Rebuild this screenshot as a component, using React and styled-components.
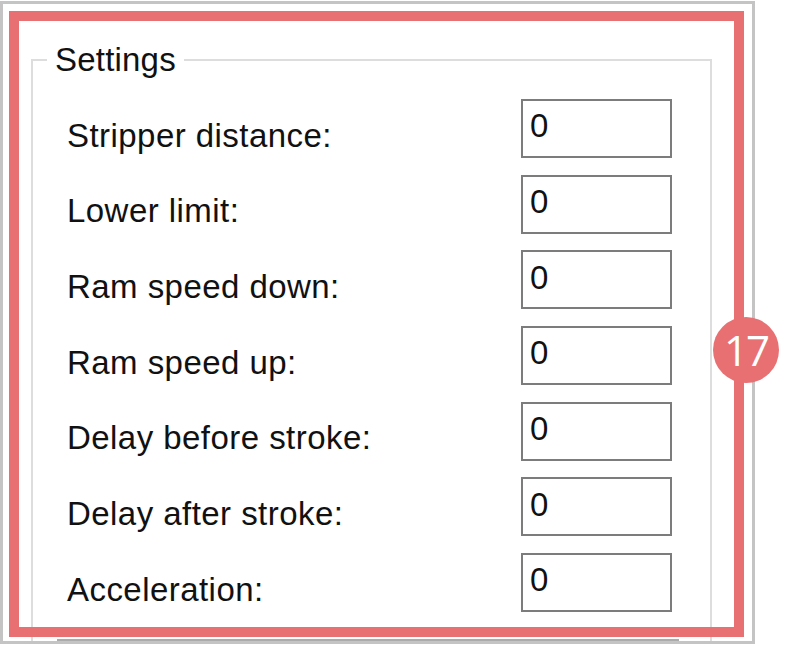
import React from 'react'
import styled, { createGlobalStyle } from 'styled-components'

const GlobalStyle = createGlobalStyle`
  html, body {
    margin: 0;
    padding: 0;
    background: #ffffff;
  }
`

const fields = [
  'Stripper distance:',
  'Lower limit:',
  'Ram speed down:',
  'Ram speed up:',
  'Delay before stroke:',
  'Delay after stroke:',
  'Acceleration:',
]

const App = () => {
  return (
    <>
      <GlobalStyle />
      <Page>
        <DialogWindow>
          <GroupBox>
            <Legend>Settings</Legend>
            <FieldGrid>
              {fields.map((label) => (
                <React.Fragment key={label}>
                  <FieldLabel>{label}</FieldLabel>
                  <NumberBox type='text' defaultValue='0' readOnly />
                </React.Fragment>
              ))}
            </FieldGrid>
            <Separator />
          </GroupBox>
        </DialogWindow>
        <Highlight />
        <Badge>17</Badge>
      </Page>
    </>
  )
}

const Page = styled.div`
  position: relative;
  width: 793px;
  height: 646px;
  overflow: hidden;
  background: #ffffff;
`

const DialogWindow = styled.div`
  box-sizing: border-box;
  width: 755px;
  height: 643px;
  margin-top: 1px;
  border: 3px solid #c4c4c4;
  background: #ffffff;
  overflow: hidden;
  display: flex;
  flex-direction: column;
  align-items: flex-start;
`

const GroupBox = styled.fieldset`
  box-sizing: border-box;
  width: 681px;
  min-width: 0;
  margin: 37.6px 0 0 28px;
  padding: 21.4px 0 40px 14px;
  border: 2px solid #dddddd;
  flex-shrink: 0;
`

const Legend = styled.legend`
  padding: 0 8px;
  font-family: 'Liberation Sans', Arial, sans-serif;
  font-size: 33px;
  line-height: 36px;
  letter-spacing: 0.2px;
  color: #111111;
`

const FieldGrid = styled.div`
  display: grid;
  grid-template-columns: 454px 151px;
  grid-auto-rows: 59px;
  row-gap: 16.67px;
  padding-left: 20px;
`

const FieldLabel = styled.div`
  padding-top: 18.6px;
  font-family: 'Liberation Sans', Arial, sans-serif;
  font-size: 33px;
  line-height: 36px;
  letter-spacing: 0.45px;
  color: #111111;
  white-space: nowrap;
`

const NumberBox = styled.input`
  box-sizing: border-box;
  width: 151px;
  height: 59px;
  margin: 0;
  padding: 0 0 4px 7px;
  border: 2px solid #7c7c7c;
  border-radius: 0;
  background: #ffffff;
  font-family: 'Liberation Sans', Arial, sans-serif;
  font-size: 33px;
  line-height: 36px;
  color: #111111;
  outline: none;
`

const Separator = styled.div`
  width: 622px;
  height: 2px;
  margin: 27px 0 0 10px;
  background: #ababab;
`

const Highlight = styled.div`
  position: absolute;
  left: 9px;
  top: 11px;
  width: 735px;
  height: 626px;
  box-sizing: border-box;
  border: 10px solid #e87073;
  pointer-events: none;
`

const Badge = styled.div`
  position: absolute;
  left: 713px;
  top: 317px;
  width: 66px;
  height: 66px;
  border-radius: 50%;
  background: #e87073;
  color: #ffffff;
  display: flex;
  align-items: center;
  justify-content: center;
  font-family: 'Open Sans', 'Noto Sans', sans-serif;
  font-size: 42px;
  letter-spacing: -2px;
  line-height: 1;
`

export default App
